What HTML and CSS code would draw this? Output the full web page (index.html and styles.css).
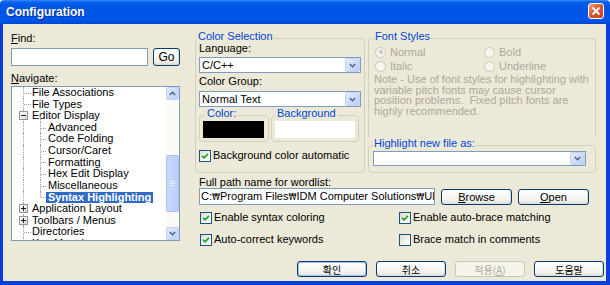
FILE: index.html
```html
<!DOCTYPE html>
<html>
<head>
<meta charset="utf-8">
<title>Configuration</title>
<link rel="stylesheet" href="styles.css">
</head>
<body>
<div class="window">
  <div class="titlebar">
    <span class="title">Configuration</span>
    <span class="close"><svg width="10" height="10" viewBox="0 0 10 10"><path d="M1.5 1.5 L8.5 8.5 M8.5 1.5 L1.5 8.5" stroke="#fff" stroke-width="1.8" fill="none"/></svg></span>
  </div>
  <div class="client">
    <div class="main">
      <div class="left">
        <div class="lbl"><u>F</u>ind:</div>
        <div class="find-row">
          <div class="input find-input"></div>
          <button class="btn go">Go</button>
        </div>
        <div class="lbl nav-lbl"><u>N</u>avigate:</div>
        <div class="tree">
          <div class="tree-items">
            <div class="row l0"><i class="v v0"></i><i class="h h0"></i><span>File Associations</span></div>
            <div class="row l0"><i class="v v0"></i><i class="h h0"></i><span>File Types</span></div>
            <div class="row l0"><i class="v v0"></i><i class="v v1 lower"></i><i class="box minus"></i><span>Editor Display</span></div>
            <div class="row l1"><i class="v v0"></i><i class="v v1"></i><i class="h h1"></i><span>Advanced</span></div>
            <div class="row l1"><i class="v v0"></i><i class="v v1"></i><i class="h h1"></i><span>Code Folding</span></div>
            <div class="row l1"><i class="v v0"></i><i class="v v1"></i><i class="h h1"></i><span>Cursor/Caret</span></div>
            <div class="row l1"><i class="v v0"></i><i class="v v1"></i><i class="h h1"></i><span>Formatting</span></div>
            <div class="row l1"><i class="v v0"></i><i class="v v1"></i><i class="h h1"></i><span>Hex Edit Display</span></div>
            <div class="row l1"><i class="v v0"></i><i class="v v1"></i><i class="h h1"></i><span>Miscellaneous</span></div>
            <div class="row l1"><i class="v v0"></i><i class="v v1 half"></i><i class="h h1"></i><span class="sel">Syntax Highlighting</span></div>
            <div class="row l0"><i class="v v0"></i><i class="box plus"></i><span>Application Layout</span></div>
            <div class="row l0"><i class="v v0"></i><i class="box plus"></i><span>Toolbars / Menus</span></div>
            <div class="row l0"><i class="v v0"></i><i class="h h0"></i><span>Directories</span></div>
            <div class="row l0"><i class="v v0"></i><i class="h h0"></i><span>Key Mapping</span></div>
          </div>
          <div class="sb">
            <div class="sb-btn"><svg width="7" height="5" viewBox="0 0 7 5"><path d="M0.8 4 L3.5 1.3 L6.2 4" stroke="#4D6185" stroke-width="1.5" fill="none"/></svg></div>
            <div class="sb-track"><div class="sb-thumb"><span></span><span></span><span></span></div></div>
            <div class="sb-btn"><svg width="7" height="5" viewBox="0 0 7 5"><path d="M0.8 1 L3.5 3.7 L6.2 1" stroke="#4D6185" stroke-width="1.5" fill="none"/></svg></div>
          </div>
        </div>
      </div>

      <div class="right">
        <div class="top-row">
          <fieldset class="group color-sel">
            <legend>Color Selection</legend>
            <div class="lbl first">Language:</div>
            <div class="combo"><span class="val">C/C++</span><span class="dd"><svg width="7" height="5" viewBox="0 0 7 5"><path d="M0.8 1 L3.5 3.7 L6.2 1" stroke="#4D6185" stroke-width="1.5" fill="none"/></svg></span></div>
            <div class="lbl cg-lbl">Color Group:</div>
            <div class="combo cg-combo"><span class="val">Normal Text</span><span class="dd"><svg width="7" height="5" viewBox="0 0 7 5"><path d="M0.8 1 L3.5 3.7 L6.2 1" stroke="#4D6185" stroke-width="1.5" fill="none"/></svg></span></div>
            <div class="swatches">
              <fieldset class="group sub sub-color"><legend>Color:</legend><div class="swatch black"></div></fieldset>
              <fieldset class="group sub sub-bg"><legend>Background</legend><div class="swatch white"></div></fieldset>
            </div>
            <div class="check bg-auto"><span class="cb"><svg width="10" height="10" viewBox="0 0 10 10"><path d="M2 4.8 L4 6.8 L8 2.8" stroke="#21A121" stroke-width="1.7" fill="none"/></svg></span>Background color automatic</div>
          </fieldset>

          <div class="stack">
            <fieldset class="group font-styles">
              <legend>Font Styles</legend>
              <div class="radios">
                <div class="radio"><span class="rd on"></span>Normal</div>
                <div class="radio"><span class="rd"></span>Bold</div>
                <div class="radio"><span class="rd"></span>Italic</div>
                <div class="radio"><span class="rd"></span>Underline</div>
              </div>
              <div class="note">Note - Use of font styles for highlighting with<br>variable pitch fonts may cause cursor<br>position problems.&nbsp; Fixed pitch fonts are<br>highly recommended.</div>
            </fieldset>
            <fieldset class="group highlight">
              <legend>Highlight new file as:</legend>
              <div class="combo hl-combo"><span class="val"></span><span class="dd"><svg width="7" height="5" viewBox="0 0 7 5"><path d="M0.8 1 L3.5 3.7 L6.2 1" stroke="#4D6185" stroke-width="1.5" fill="none"/></svg></span></div>
            </fieldset>
          </div>
        </div>

        <div class="lbl path-lbl">Full path name for wordlist:</div>
        <div class="path-row">
          <div class="input path-input"><span class="path-text">C:<span class="won">₩</span>Program Files<span class="won">₩</span>IDM Computer Solutions<span class="won">₩</span>Ultr</span></div>
          <button class="btn wide"><u>B</u>rowse</button>
          <button class="btn wide"><u>O</u>pen</button>
        </div>
        <div class="checks">
          <div class="check"><span class="cb"><svg width="10" height="10" viewBox="0 0 10 10"><path d="M2 4.8 L4 6.8 L8 2.8" stroke="#21A121" stroke-width="1.7" fill="none"/></svg></span>Enable syntax coloring</div>
          <div class="check"><span class="cb"><svg width="10" height="10" viewBox="0 0 10 10"><path d="M2 4.8 L4 6.8 L8 2.8" stroke="#21A121" stroke-width="1.7" fill="none"/></svg></span>Enable auto-brace matching</div>
          <div class="check"><span class="cb"><svg width="10" height="10" viewBox="0 0 10 10"><path d="M2 4.8 L4 6.8 L8 2.8" stroke="#21A121" stroke-width="1.7" fill="none"/></svg></span>Auto-correct keywords</div>
          <div class="check"><span class="cb"></span>Brace match in comments</div>
        </div>
      </div>
    </div>

    <div class="buttons">
      <button class="btn dlg default">확인</button>
      <button class="btn dlg">취소</button>
      <button class="btn dlg disabled">적용(<u>A</u>)</button>
      <button class="btn dlg">도움말</button>
    </div>
  </div>
</div>
</body>
</html>
```
FILE: styles.css
```css
* { box-sizing: border-box; }
html, body { margin: 0; padding: 0; }
body {
  width: 610px;
  height: 285px;
  overflow: hidden;
  font-family: "Liberation Sans", Arial, sans-serif;
  font-size: 11px;
  color: #000;
  background: #fff;
}
.window { width: 610px; height: 285px; display: flex; flex-direction: column; }

.titlebar {
  height: 24px;
  flex: none;
  display: flex;
  justify-content: space-between;
  align-items: flex-start;
  padding: 0 6px 0 6px;
  border-radius: 4px 4px 0 0;
  background: linear-gradient(#3A87F8 0, #0C63EE 2px, #0059E8 5px, #0055E4 40%, #0057EA 80%, #0048D4 100%);
}
.title {
  color: #fff;
  font-weight: bold;
  font-size: 12px;
  line-height: 24px;
  text-shadow: 1px 1px 0 #0A2A9C;
}
.close {
  margin-top: 3px;
  width: 16px;
  height: 16px;
  border: 1px solid #fff;
  border-radius: 3px;
  background: linear-gradient(135deg, #EFA287 0%, #DC5A34 45%, #C9411C 100%);
  display: flex;
  align-items: center;
  justify-content: center;
}

.client {
  flex: 1;
  display: flex;
  flex-direction: column;
  background: #ECE9D8;
  border-style: solid;
  border-color: #0B3FDB;
  border-width: 0 4px 4px 3px;
  padding: 6px 2px 4px 8px;
}
.main { display: flex; gap: 15px; }
.left { width: 169px; margin-top: 2px; }
.right { width: 402px; }

.lbl { line-height: 13px; height: 13px; white-space: nowrap; }

.input {
  background: #fff;
  border: 1px solid #7F9DB9;
  white-space: nowrap;
  overflow: hidden;
}
.find-row { display: flex; gap: 5px; margin-top: 3px; }
.find-input { width: 137px; height: 18px; }

.btn {
  font-family: "Liberation Sans", "Noto Sans CJK KR", Arial, sans-serif;
  font-size: 11px;
  color: #000;
  padding: 0;
  border: 1px solid #003C74;
  border-radius: 3px;
  background: linear-gradient(#FFFFFF 0%, #F7F7F4 50%, #ECEBE6 85%, #D8D4CA 100%);
  box-shadow: inset -1px -1px 0 #E0DCD0;
  line-height: 14px;
  text-align: center;
}
.go { width: 27px; height: 18px; font-size: 12px; }
.nav-lbl { margin-top: 6px; }

/* tree */
.tree {
  margin-top: 1px;
  height: 155px;
  border: 1px solid #7F9DB9;
  background: #fff;
  display: flex;
}
.tree-items { flex: 1; overflow: hidden; }
.row {
  position: relative;
  height: 11.6px;
  line-height: 11.6px;
  white-space: nowrap;
}
.row.l0 { padding-left: 18px; }
.row.l1 { padding-left: 34px; }
.row span { display: inline-block; padding: 0 2px; }
.row .sel {
  background: #316AC5;
  color: #fff;
  font-weight: bold;
  line-height: 11px;
  height: 11px;
  vertical-align: top;
  margin-top: 0.3px;
}
.row i { position: absolute; display: block; }
.v { top: 0; bottom: 0; border-left: 1px dotted #A0A0A0; }
.v0 { left: 11px; }
.v1 { left: 28px; }
.v1.half { bottom: 50%; }
.v1.lower { top: 50%; }
.h { top: 50%; height: 0; border-top: 1px dotted #A0A0A0; }
.h0 { left: 12px; width: 7px; }
.h1 { left: 29px; width: 5px; }
.box {
  left: 7px;
  top: 50%;
  margin-top: -4.5px;
  width: 9px;
  height: 9px;
  border: 1px solid #8C98A8;
  background: linear-gradient(135deg, #FFFFFF 0%, #F1F0EB 50%, #D6D3C8 100%);
}
.box::before {
  content: "";
  position: absolute;
  left: 1px;
  top: 3px;
  width: 5px;
  height: 1px;
  background: #1A1A1A;
}
.box.plus::after {
  content: "";
  position: absolute;
  left: 3px;
  top: 1px;
  width: 1px;
  height: 5px;
  background: #1A1A1A;
}

.sb {
  width: 13px;
  display: flex;
  flex-direction: column;
  background: #FBFAF6;
}
.sb-btn {
  height: 13px;
  border: 1px solid #C0D2F6;
  border-radius: 2px;
  background: linear-gradient(135deg, #E0EAFD, #BDD0FA);
  display: flex;
  align-items: center;
  justify-content: center;
}
.sb-track { flex: 1; }
.sb-thumb {
  margin-top: 55px;
  height: 57px;
  border: 1px solid #A9C1F1;
  border-radius: 2px;
  background: linear-gradient(90deg, #C8D9FC, #B9CEF9);
  display: flex;
  flex-direction: column;
  align-items: center;
  justify-content: center;
  gap: 1px;
}
.sb-thumb span { display: block; width: 5px; height: 1px; background: #E8EFFD; }

/* right */
.top-row { display: flex; gap: 3px; height: 143px; }

fieldset.group {
  margin: 0;
  padding: 0;
  min-width: 0;
  border: 1px solid #D0D0BF;
  border-radius: 4px;
}
fieldset.group > legend {
  color: #0046D5;
  line-height: 13px;
  padding: 0 1px 3px;
  margin-left: 0;
  white-space: nowrap;
}
fieldset.group.color-sel { width: 170px; padding: 0 3px 9px 3px; }
fieldset.group.color-sel > legend { margin-left: -2px; }
.lbl.first { margin-top: -4px; }

.combo {
  height: 16px;
  border: 1px solid #7F9DB9;
  background: #fff;
  display: flex;
  align-items: center;
  margin-top: 2px;
}
.combo .val { flex: 1; padding-left: 2px; white-space: nowrap; line-height: 14px; }
.combo .dd {
  width: 15px;
  height: 14px;
  border: 1px solid #C1D2F5;
  border-radius: 2px;
  background: linear-gradient(135deg, #E3ECFD, #BACEF8);
  display: flex;
  align-items: center;
  justify-content: center;
}
.cg-lbl { margin-top: 2px; }
.combo.cg-combo { margin-top: 3px; }

.swatches { display: flex; gap: 2px; }
fieldset.group.sub { padding: 0 3px 3px 3px; }
fieldset.group.sub-color { width: 70px; }
fieldset.group.sub-color > legend { margin-left: 2px; padding: 0 2px 3px; }
fieldset.group.sub-bg { width: 88px; }
fieldset.group.sub-bg > legend { padding: 0 2px 3px; }
.swatch { margin-top: -2px; height: 17px; }
.swatch.black { width: 61px; background: #000; }
.swatch.white { width: 80px; background: #fff; }

.check { display: flex; align-items: center; line-height: 13px; height: 13px; white-space: nowrap; }
.cb {
  width: 12px;
  height: 12px;
  flex: none;
  margin-right: 2px;
  border: 1px solid #1C5180;
  background: linear-gradient(135deg, #DCDCD5 0%, #F3F3F0 60%, #FFFFFF 100%);
  display: flex;
  align-items: center;
  justify-content: center;
}
.bg-auto { margin-top: 7px; }

.stack { width: 228px; display: flex; flex-direction: column; }
fieldset.group.font-styles {
  flex: 1;
  padding: 0 4px 0 5px;
  border-bottom: none;
  border-radius: 4px 4px 0 0;
}
.radios {
  display: grid;
  grid-template-columns: 109px auto;
  margin-top: -1px;
}
.radio {
  display: flex;
  align-items: center;
  height: 14px;
  line-height: 14px;
  color: #ACA899;
}
.rd {
  width: 11px;
  height: 11px;
  margin-left: 1px;
  margin-right: 4px;
  border: 1px solid #CAC8BB;
  border-radius: 50%;
  background: #F5F4EE;
  position: relative;
}
.rd.on::after {
  content: "";
  position: absolute;
  left: 2.5px;
  top: 2.5px;
  width: 4px;
  height: 4px;
  border-radius: 50%;
  background: #CAC8BB;
}
.note {
  margin-top: 1px;
  line-height: 10.5px;
  color: #ACA899;
  white-space: nowrap;
}
fieldset.group.highlight { padding: 0 9px 6px 4px; }
.combo.hl-combo { margin-top: -2px; height: 15px; }
.hl-combo .dd { height: 13px; }

.path-lbl { margin-top: 3px; height: 12px; line-height: 12px; padding-left: 4px; }
.path-row { display: flex; align-items: center; gap: 6px; padding-left: 4px; }
.path-input {
  width: 236px;
  height: 17px;
  line-height: 15px;
  padding-left: 1px;
}
.path-text { display: inline-block; max-width: 233px; overflow: hidden; vertical-align: top; }
.won {
  font-family: "DejaVu Sans Condensed", "DejaVu Sans", sans-serif;
  font-size: 9px;
}
.btn.wide { width: 71px; height: 16px; }

.checks {
  display: grid;
  grid-template-columns: 199px auto;
  row-gap: 9px;
  margin-top: 6px;
  padding-left: 5px;
}

.buttons {
  margin-top: auto;
  display: flex;
  justify-content: flex-end;
  gap: 9px;
}
.btn.dlg {
  width: 70px;
  height: 16px;
  font-family: "Noto Sans CJK KR", "Liberation Sans", sans-serif;
  font-size: 10px;
  line-height: 13px;
}
.btn.default { box-shadow: inset 0 0 0 1px #A9C4EE; }
.btn.disabled {
  color: #ACA899;
  border-color: #C9C7BA;
  background: #F5F4EA;
  box-shadow: none;
}
```
